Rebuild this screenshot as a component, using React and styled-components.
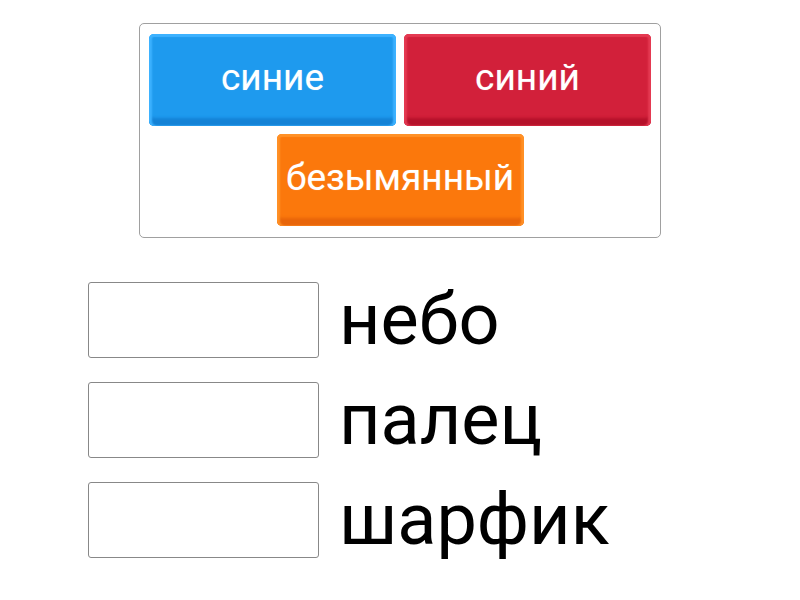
import { createGlobalStyle } from 'styled-components'
import styled from 'styled-components'

const GlobalStyle = createGlobalStyle`
  html, body {
    margin: 0;
    padding: 0;
    background: #ffffff;
    font-family: Roboto, "Liberation Sans", sans-serif;
  }
`

const palette = {
  blue: { base: '#1e9aee', light: '#3db2ff', dark: '#1482d6' },
  red: { base: '#d2203a', light: '#e43a52', dark: '#b5112a' },
  orange: { base: '#fb780c', light: '#ff9127', dark: '#e8650a' }
}

const tiles = [
  { id: 't1', label: 'синие', color: 'blue' },
  { id: 't2', label: 'синий', color: 'red' },
  { id: 't3', label: 'безымянный', color: 'orange' }
]

const words = ['небо', 'палец', 'шарфик']

export default function App() {
  return (
    <>
      <GlobalStyle />
      <Page>
        <TileBank>
          {tiles.map((tile) => (
            <Tile key={tile.id} $color={tile.color}>{tile.label}</Tile>
          ))}
        </TileBank>
        <Rows>
          {words.map((word) => (
            <Row key={word}>
              <DropBox />
              <Word>{word}</Word>
            </Row>
          ))}
        </Rows>
      </Page>
    </>
  )
}

// STYLES
const Page = styled.div`
  width: 800px;
  height: 600px;
  padding-top: 23px;
  box-sizing: border-box;
  overflow: hidden;
`

const TileBank = styled.div`
  width: 522px;
  margin: 0 auto;
  box-sizing: border-box;
  padding: 10px 9px 11px;
  border: 1px solid #a0a0a0;
  border-radius: 5px;
  display: flex;
  flex-wrap: wrap;
  justify-content: center;
  gap: 8px;
`

const Tile = styled.div`
  width: 247px;
  height: 92px;
  box-sizing: border-box;
  border-radius: 5px;
  padding-bottom: 5px;
  display: flex;
  align-items: center;
  justify-content: center;
  color: #ffffff;
  font-size: 37px;
  text-shadow: 0 0 1px rgba(255, 255, 255, 0.4);
  background: ${(p) => palette[p.$color].base};
  box-shadow:
    inset 0 3px 1px ${(p) => palette[p.$color].light},
    inset 3px 0 2px ${(p) => palette[p.$color].light},
    inset -3px 0 2px ${(p) => palette[p.$color].light},
    inset 0 -8px 3px ${(p) => palette[p.$color].dark};
`

const Rows = styled.div`
  margin-top: 44px;
  padding-left: 88px;
  display: flex;
  flex-direction: column;
  gap: 24px;
`

const Row = styled.div`
  display: flex;
  align-items: center;
  gap: 20px;
`

const DropBox = styled.div`
  width: 231px;
  height: 76px;
  box-sizing: border-box;
  border: 1px solid #888888;
  border-radius: 3px;
  background: #ffffff;
`

const Word = styled.div`
  font-size: 72px;
  line-height: 76px;
  color: #000000;
`
